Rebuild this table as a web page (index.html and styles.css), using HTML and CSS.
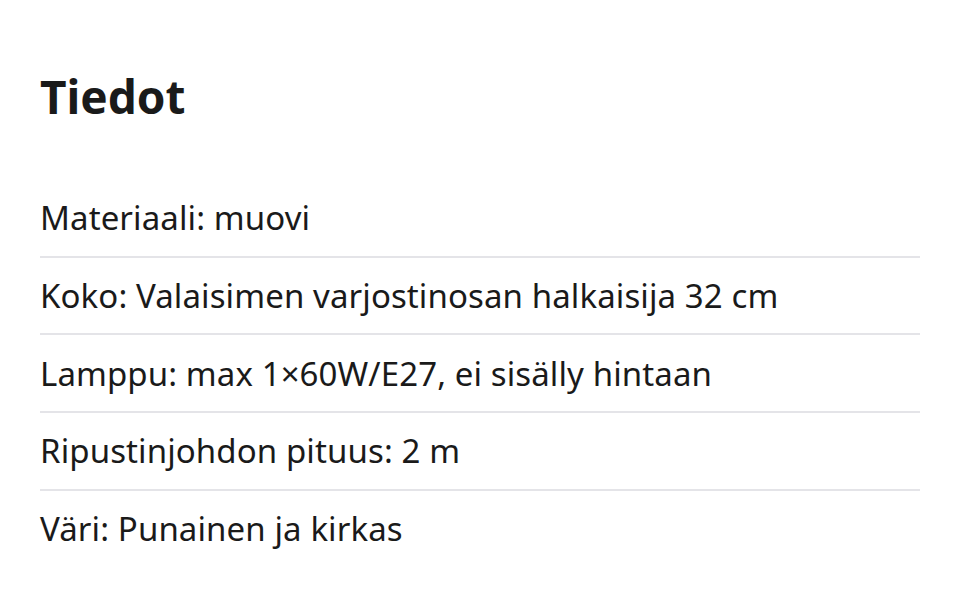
FILE: index.html
```html
<!DOCTYPE html>
<html lang="fi">
<head>
<meta charset="utf-8">
<link rel="stylesheet" href="styles.css">
</head>
<body>
<section class="details">
  <h2 class="title">Tiedot</h2>
  <ul class="list">
    <li class="row">Materiaali: muovi</li>
    <li class="row">Koko: Valaisimen varjostinosan halkaisija 32 cm</li>
    <li class="row">Lamppu: max 1×60W/E27, ei sisälly hintaan</li>
    <li class="row">Ripustinjohdon pituus: 2 m</li>
    <li class="row">Väri: Punainen ja kirkas</li>
  </ul>
</section>
</body>
</html>
```
FILE: styles.css
```css
html, body { margin: 0; padding: 0; background: #fff; }
body { font-family: "Noto Sans", "Open Sans", sans-serif; color: #1a1a1a; }
.details { padding: 60px 40px 0 40px; }
.title { margin: 0; font-size: 46px; font-weight: 700; line-height: 72px; }
.list { list-style: none; margin: 48px 0 0 0; padding: 0; }
.row { font-size: 33px; letter-spacing: 0.1px; height: 75.7px; display: flex; align-items: center; border-bottom: 2px solid #e4e4e8; }
.row:last-child { border-bottom: none; }
```
